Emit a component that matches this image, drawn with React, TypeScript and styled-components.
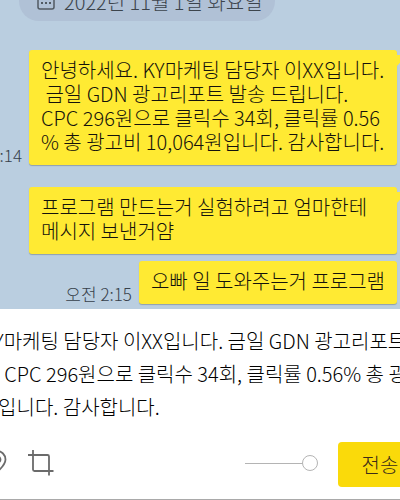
import React from "react";
import styled, { createGlobalStyle } from "styled-components";

const GlobalStyle = createGlobalStyle`
  *, *::before, *::after { box-sizing: border-box; }
  body {
    margin: 0;
    overflow: hidden;
    background: #fff;
    font-family: "Noto Sans CJK KR", sans-serif;
    font-weight: 300;
  }
  button, textarea { font: inherit; }
`;

const Window = styled.main`
  display: flex;
  flex-direction: column;
  height: 100vh;
  overflow: hidden;
  border-bottom: 1px solid #a9a9a9;
`;

const Chat = styled.section`
  display: flex;
  flex-direction: column;
  align-items: flex-end;
  padding: 0 3px 5px 19px;
  background: #bacee0;
`;

const DateChip = styled.div`
  display: flex;
  align-items: center;
  align-self: flex-start;
  gap: 9px;
  height: 40px;
  margin-top: -19px;
  margin-bottom: 29px;
  padding: 0 12px 0 18px;
  border-radius: 20px;
  background: #b0c1d6;
  color: #3c444c;
  font-size: 20px;
  white-space: nowrap;
  svg { flex: none; }
`;

const MessageRow = styled.div<{ $gap: number }>`
  display: flex;
  justify-content: flex-end;
  align-items: flex-end;
  gap: 7px;
  margin-bottom: ${(p) => p.$gap}px;
`;

const Time = styled.time`
  color: #36404a;
  font-size: 17px;
  line-height: 20px;
  white-space: nowrap;
`;

const Bubble = styled.p<{ $tail?: boolean; $wide?: boolean }>`
  position: relative;
  flex: none;
  width: ${(p) => (p.$wide ? "368px" : "auto")};
  margin: 0;
  padding: 8px 12px 11px;
  border-radius: 3px;
  background: #ffea33;
  box-shadow: 0 1px 1px #8fa0ae;
  color: #14120c;
  font-size: 20px;
  line-height: 24px;
  white-space: pre;

  &::after {
    content: "";
    display: ${(p) => (p.$tail ? "block" : "none")};
    position: absolute;
    top: 5px;
    left: 100%;
    border-top: 11px solid #ffea33;
    border-right: 10px solid transparent;
  }
`;

const Composer = styled.form`
  display: flex;
  flex: 1;
  flex-direction: column;
  background: #fff;
`;

const Draft = styled.textarea`
  display: block;
  width: calc(100% + 160px);
  height: 115px;
  margin-left: -120px;
  padding: 15px 0 0;
  border: 0;
  outline: 0;
  resize: none;
  overflow: hidden;
  background: transparent;
  color: #000;
  font-size: 20px;
  line-height: 33px;
  white-space: pre;
`;

const Toolbar = styled.div`
  display: flex;
  align-items: flex-start;
  height: 45px;
  margin: 18px -22px 0 -20px;
`;

const ToolButton = styled.button`
  display: flex;
  margin: 8px 20px 0 0;
  padding: 0;
  border: 0;
  background: none;
  color: #6b6b6b;
`;

const Opacity = styled.input`
  appearance: none;
  width: 73px;
  height: 18px;
  margin: 12px 20px 0 auto;
  background: linear-gradient(#b4b4b4, #b4b4b4) 0 9px / 58px 1px no-repeat;

  &::-webkit-slider-thumb {
    appearance: none;
    width: 16px;
    height: 16px;
    border: 1px solid #b4b4b4;
    border-radius: 50%;
    background: #fff;
  }
`;

const Send = styled.button`
  width: 84px;
  height: 45px;
  padding: 0;
  border: 0;
  border-radius: 4px;
  background: #fada0a;
  color: #3c2c18;
  font-size: 20px;
`;

const CalendarIcon = () => (
  <svg width="18" height="20" viewBox="0 0 18 20" fill="none" stroke="#515a63" strokeWidth="1.5" aria-hidden="true">
    <rect x="1" y="2" width="16" height="16" rx="2" />
    <path d="M1 7h16M5 0v4M13 0v4" />
    <path d="M4 12h2M8 12h2M12 12h2" strokeWidth="2" />
  </svg>
);

const PinIcon = () => (
  <svg width="28" height="26" viewBox="0 0 28 26" fill="none" stroke="currentColor" strokeWidth="1.8" aria-hidden="true">
    <path d="M17 22C13 18.500 8.500 14.500 8.500 9.500a8.500 8.500 0 0 1 17 0c0 5-4.500 9-8.500 12.500Z" />
    <circle cx="17" cy="9.500" r="3.500" />
  </svg>
);

const CropIcon = () => (
  <svg width="26" height="26" viewBox="0 0 26 26" fill="none" stroke="currentColor" strokeWidth="1.8" aria-hidden="true">
    <path d="M0 5h19.500a1.500 1.500 0 0 1 1.500 1.500v19" />
    <path d="M5 0v19.500a1.500 1.500 0 0 0 1.500 1.500h19" />
  </svg>
);

const messages = [
  {
    text: "안녕하세요. KY마케팅 담당자 이XX입니다.\n 금일 GDN 광고리포트 발송 드립니다.\nCPC 296원으로 클릭수 34회, 클릭률 0.56\n% 총 광고비 10,064원입니다. 감사합니다.",
    time: ":14",
    tail: true,
    wide: true,
    gap: 22,
  },
  { text: "프로그램 만드는거 실험하려고 엄마한테\n메시지 보낸거얌", tail: true, wide: true, gap: 7 },
  { text: "오빠 일 도와주는거 프로그램", time: "오전 2:15", gap: 0 },
];

const draft =
  "안녕하세요. KY마케팅 담당자 이XX입니다. 금일 GDN 광고리포트\n발송 드립니다. CPC 296원으로 클릭수 34회, 클릭률 0.56% 총 광\n고비 10,064원입니다. 감사합니다.";

export default function App() {
  return (
    <>
      <GlobalStyle />
      <Window>
        <Chat>
          <DateChip>
            <CalendarIcon />
            2022년 11월 1일 화요일
          </DateChip>
          {messages.map((m) => (
            <MessageRow key={m.text} $gap={m.gap}>
              {m.time && <Time>{m.time}</Time>}
              <Bubble $tail={m.tail} $wide={m.wide}>{m.text}</Bubble>
            </MessageRow>
          ))}
        </Chat>
        <Composer onSubmit={(e) => e.preventDefault()}>
          <Draft aria-label="메시지" defaultValue={draft} spellCheck={false} />
          <Toolbar>
            <ToolButton type="button" aria-label="위치"><PinIcon /></ToolButton>
            <ToolButton type="button" aria-label="캡처"><CropIcon /></ToolButton>
            <Opacity type="range" aria-label="투명도" min={0} max={100} defaultValue={100} />
            <Send type="submit">전송</Send>
          </Toolbar>
        </Composer>
      </Window>
    </>
  );
}
